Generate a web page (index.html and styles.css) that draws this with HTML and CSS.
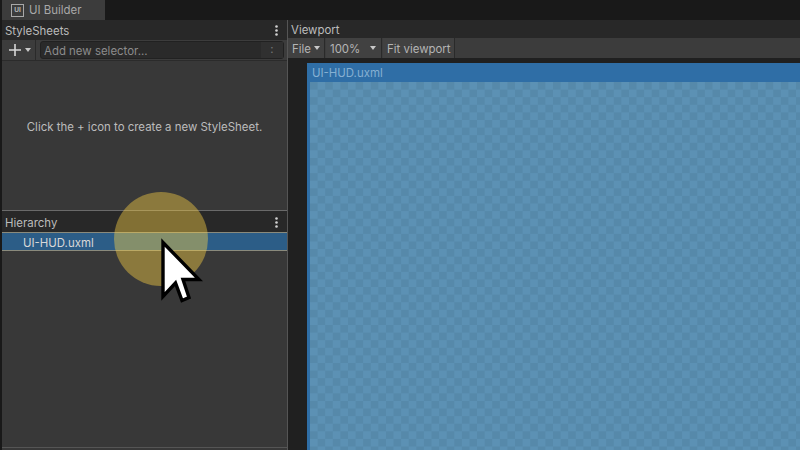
FILE: index.html
```html
<!DOCTYPE html>
<html lang="en">
<head>
<meta charset="utf-8">
<title>UI Builder</title>
<link rel="stylesheet" href="styles.css">
</head>
<body>
<div class="app">
  <div class="tabstrip">
    <div class="tab">
      <span class="tab-icon">UI</span>
      <span>UI Builder</span>
    </div>
  </div>
  <div class="main">
    <div class="left">
      <section class="styles">
        <div class="head">
          <span>StyleSheets</span>
          <svg class="kebab" width="3" height="11" viewBox="0 0 3 11"><circle cx="1.5" cy="1.5" r="1.3"/><circle cx="1.5" cy="5.5" r="1.3"/><circle cx="1.5" cy="9.5" r="1.3"/></svg>
        </div>
        <div class="selector-bar">
          <div class="add-btn">
            <svg width="12" height="12" viewBox="0 0 12 12"><path d="M5.2 0h1.6v5.2H12v1.6H6.8V12H5.2V6.8H0V5.2h5.2z"/></svg>
            <span class="caret"></span>
          </div>
          <div class="selector-field">
            <span>Add new selector...</span>
            <span class="colon">:</span>
          </div>
        </div>
        <div class="empty">Click the + icon to create a new StyleSheet.</div>
      </section>
      <section class="hierarchy">
        <div class="head head-h">
          <span>Hierarchy</span>
          <svg class="kebab" width="3" height="11" viewBox="0 0 3 11"><circle cx="1.5" cy="1.5" r="1.3"/><circle cx="1.5" cy="5.5" r="1.3"/><circle cx="1.5" cy="9.5" r="1.3"/></svg>
        </div>
        <div class="row">UI-HUD.uxml</div>
        <div class="fill"></div>
      </section>
    </div>
    <div class="right">
      <div class="head head-v">Viewport</div>
      <div class="toolbar">
        <div class="tool tool-file">File<span class="caret"></span></div>
        <div class="tool tool-zoom">100%<span class="caret"></span></div>
        <div class="tool tool-fit">Fit viewport</div>
      </div>
      <div class="canvas">
        <div class="doc">
          <div class="doc-title">UI-HUD.uxml</div>
          <div class="doc-body"></div>
        </div>
      </div>
    </div>
  </div>
</div>
<div class="spot"></div>
<svg class="cursor" width="60" height="76" viewBox="0 0 60 76">
  <path d="M5 6.5V60.5L17.5 47 24 64.5 31 61.5 25 43.5H41Z"/>
</svg>
</body>
</html>
```
FILE: styles.css
```css
* { box-sizing: border-box; }
html, body { margin: 0; padding: 0; }
body {
  width: 800px;
  height: 450px;
  overflow: hidden;
  position: relative;
  background: #191919;
  font-family: Inter, "Liberation Sans", sans-serif;
  font-size: 11.45px;
  color: #c4c4c4;
}
.app { width: 800px; height: 450px; display: flex; flex-direction: column; }
.tabstrip { height: 20px; flex: none; background: #191919; padding-left: 2px; display: flex; }
.tab {
  width: 103px;
  background: #3c3c3c;
  display: flex;
  align-items: center;
  gap: 5px;
  padding-left: 9px;
  color: #a8a8a8;
}
.tab-icon {
  width: 13px;
  height: 13px;
  border: 1.5px solid #a8a8a8;
  font-size: 6.5px;
  font-weight: 700;
  line-height: 10px;
  text-align: center;
  color: #b8b8b8;
}
.main { flex: 1; display: flex; min-height: 0; }
.left {
  width: 286px;
  margin-left: 2px;
  flex: none;
  display: flex;
  flex-direction: column;
  border-right: 1px solid #555;
  background: #383838;
}
.head {
  height: 20px;
  flex: none;
  background: #282828;
  display: flex;
  align-items: center;
  justify-content: space-between;
  padding: 1px 9px 0 3px;
  color: #bcbcbc;
}
.kebab { fill: #d2d2d2; }
.styles { height: 190px; flex: none; display: flex; flex-direction: column; }
.selector-bar {
  height: 21px;
  flex: none;
  background: #3c3c3c;
  border-bottom: 1px solid #2b2b2b;
  display: flex;
}
.add-btn {
  width: 34px;
  flex: none;
  border-right: 1px solid #2a2a2a;
  display: flex;
  align-items: center;
  padding-left: 7px;
  gap: 4px;
}
.add-btn svg { fill: #d6d6d6; }
.caret {
  display: inline-block;
  width: 0;
  height: 0;
  border-left: 3.5px solid transparent;
  border-right: 3.5px solid transparent;
  border-top: 4px solid #c8c8c8;
}
.selector-field {
  width: 244px;
  height: 18px;
  margin: 1px 0 0 4px;
  background: #2a2a2a;
  border: 1px solid #212121;
  border-radius: 3px;
  display: flex;
  align-items: center;
  justify-content: space-between;
  padding: 1px 4px 0 3px;
  color: #8c8c8c;
}
.colon {
  width: 22px;
  text-align: center;
  background: #303030;
  height: 16px;
  line-height: 15px;
  margin: -1px -4px 0 0;
  color: #777;
}
.empty {
  flex: 1;
  text-align: center;
  padding-top: 59px;
  color: #bcbcbc;
}
.hierarchy { flex: 1; display: flex; flex-direction: column; min-height: 0; }
.head-h { border-top: 1px solid #6a6a6a; height: 22px; padding-top: 2px; }
.row {
  height: 19px;
  flex: none;
  background: #2c5d87;
  border-top: 1px solid #8a8a7c;
  border-bottom: 1px solid #8a8a7c;
  padding: 1px 0 0 21px;
  line-height: 18px;
  color: #d8d8d8;
}
.fill { flex: 1; border-bottom: 1px solid #555; margin-bottom: 2px; }
.right { flex: 1; display: flex; flex-direction: column; min-width: 0; background: #202020; }
.head-v { height: 18px; padding: 2px 0 0 3px; justify-content: flex-start; }
.toolbar { height: 20px; flex: none; background: #3c3c3c; display: flex; gap: 2px; }
.tool {
  background: #414141;
  box-shadow: 1px 0 0 #2a2a2a;
  display: flex;
  align-items: center;
  color: #b4b4b4;
  padding: 2px 0 0 4px;
}
.tool .caret { margin-top: -2px; }
.tool-file { width: 36px; gap: 3px; }
.tool-zoom { width: 55px; justify-content: space-between; padding-right: 5px; }
.tool-fit { width: 71px; }
.canvas { flex: 1; padding: 5px 0 0 19px; min-height: 0; background: #202020; }
.doc { height: 100%; display: flex; flex-direction: column; background: #2f6ea6; padding-left: 3px; }
.doc-title { height: 19px; flex: none; margin-left: 2px; padding-top: 1px; line-height: 18px; color: #86b0d2; }
.doc-body {
  flex: 1;
  background: repeating-conic-gradient(#5c91b4 0 25%, #5689aa 0 50%) 0 0 / 15.2px 15.2px;
}
.spot {
  position: absolute;
  left: 114px;
  top: 192px;
  width: 94px;
  height: 94px;
  border-radius: 50%;
  background: rgba(255, 213, 70, 0.42);
}
.cursor { position: absolute; left: 158px; top: 236px; }
.cursor path { fill: #fff; stroke: #000; stroke-width: 3.4; stroke-linejoin: miter; }
```
